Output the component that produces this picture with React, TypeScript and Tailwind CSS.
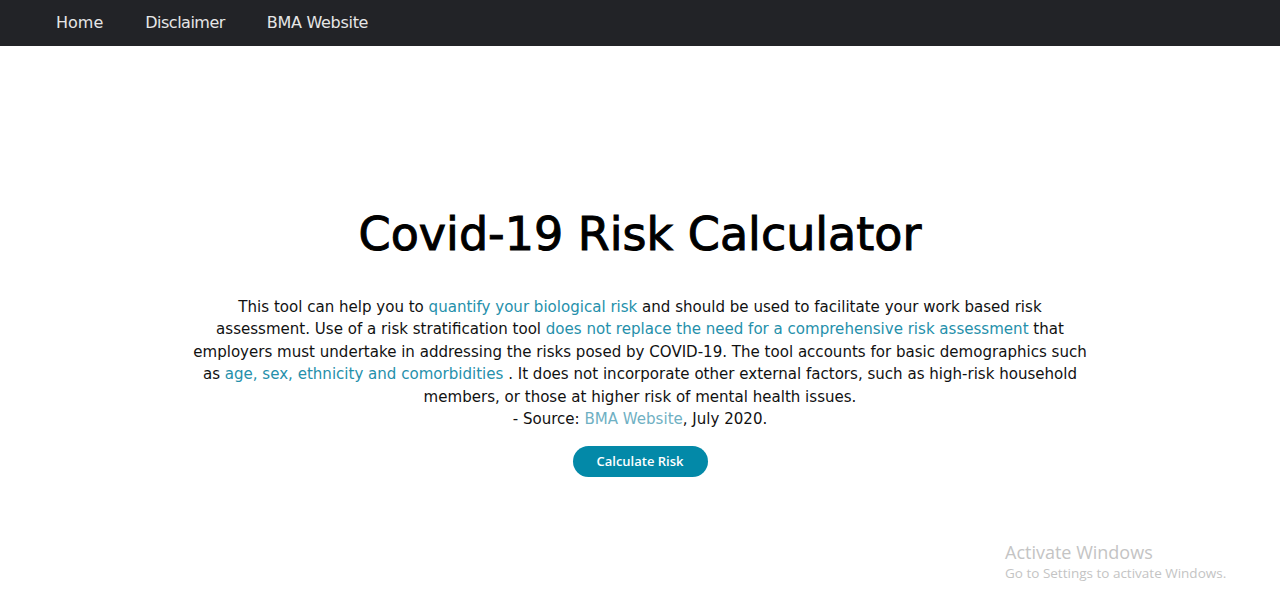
import React from "react";

const font = { fontFamily: '"DejaVu Sans", "Open Sans", sans-serif' };

export default function App() {
  return (
    <div className="relative min-h-[604px] bg-white text-black" style={font}>
      <nav className="flex h-[46px] items-center bg-[#222327] pl-[56px] text-[16px] text-[#e6e6e6]">
        <a className="mr-[42px]">Home</a>
        <a className="mr-[42px] tracking-[-0.5px]">Disclaimer</a>
        <a className="tracking-[-0.3px]">BMA Website</a>
      </nav>
      <main className="flex flex-col items-center pt-[160px]">
        <h1 className="text-[46px] font-medium leading-[56px] text-black [-webkit-text-stroke:1px_black]">
          Covid-19 Risk Calculator
        </h1>
        <p className="mt-[34px] text-center text-[15.05px] leading-[22.4px] text-[#111]">
          This tool can help you to <a className="text-[#2590ab]">quantify your biological risk</a> and should be used to facilitate your work based risk
          <br />
          assessment. Use of a risk stratification tool <a className="text-[#2590ab]">does not replace the need for a comprehensive risk assessment</a> that
          <br />
          employers must undertake in addressing the risks posed by COVID-19. The tool accounts for basic demographics such
          <br />
          as <a className="text-[#2590ab]">age, sex, ethnicity and comorbidities</a> . It does not incorporate other external factors, such as high-risk household
          <br />
          members, or those at higher risk of mental health issues.
          <br />- Source: <a className="text-[#6fb0c3]">BMA Website</a>, July 2020.
        </p>
        <button
          className="mt-[16px] h-[31px] w-[135px] rounded-full bg-[#0389a8] text-[13px] font-semibold text-white"
          style={{ fontFamily: '"Open Sans", sans-serif' }}
        >
          Calculate Risk
        </button>
      </main>
      <div
        className="pointer-events-none absolute left-[1005px] top-[541px] text-[#c4c4c4]"
        style={{ fontFamily: '"Open Sans", "Noto Sans", sans-serif' }}
      >
        <div className="text-[18px] leading-[22px]">Activate Windows</div>
        <div className="text-[13.5px] leading-[20px]">Go to Settings to activate Windows.</div>
      </div>
    </div>
  );
}
